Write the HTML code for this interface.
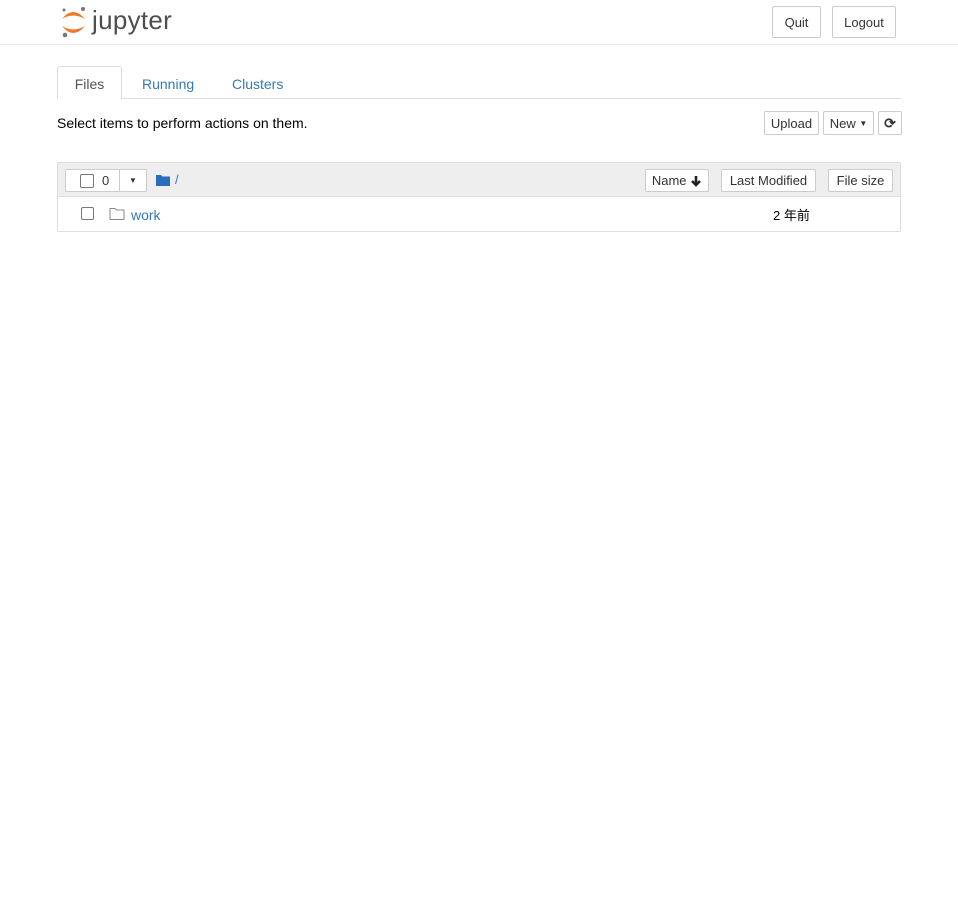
<!DOCTYPE html>
<html><head><meta charset="utf-8"><style>
*{box-sizing:border-box}
body{margin:0;background:#fff;font-family:"Liberation Sans",Arial,sans-serif;font-size:13px;color:#000;width:958px;height:911px;overflow:hidden;position:relative}
.a{position:absolute}
.btn{position:absolute;border:1px solid #ccc;background:#fff;color:#333;font-size:13px;display:flex;align-items:center;justify-content:center;border-radius:2px}
</style></head><body>
<svg class="a" style="left:58px;top:4px" width="32" height="36" viewBox="0 0 32 36">
<path d="M4 15 Q15 1 27 15 Q15 8 4 15Z" fill="#f37726"/>
<path d="M4 22 Q15 36 27 22 Q15 29 4 22Z" fill="#f37726"/>
<circle cx="6" cy="6" r="1.5" fill="#767677"/>
<circle cx="25" cy="5" r="2" fill="#767677"/>
<circle cx="7" cy="31" r="2.3" fill="#767677"/>
</svg>
<div class="a" style="left:92px;top:5px;font-size:26px;color:#4e4e4e;letter-spacing:0.3px">jupyter</div>
<div class="btn" style="left:772px;top:6px;width:49px;height:32px">Quit</div>
<div class="btn" style="left:832px;top:6px;width:64px;height:32px">Logout</div>
<div class="a" style="left:0;top:44px;width:958px;height:1px;background:#e7e7e7"></div>

<div class="a" style="left:57px;top:98px;width:844px;height:1px;background:#ddd"></div>
<div class="a" style="left:57px;top:66px;width:65px;height:33px;border:1px solid #ddd;border-bottom:none;background:#fff;border-radius:3px 3px 0 0;color:#555;font-size:14px;text-align:center;line-height:34px">Files</div>
<div class="a" style="left:142px;top:76px;color:#337ab7;font-size:14px">Running</div>
<div class="a" style="left:232px;top:76px;color:#337ab7;font-size:14px">Clusters</div>
<div class="a" style="left:57px;top:115px;font-size:14px">Select items to perform actions on them.</div>
<div class="btn" style="left:764px;top:111px;width:55px;height:24px;font-size:13px">Upload</div>
<div class="btn" style="left:823px;top:111px;width:51px;height:24px;font-size:13px">New&nbsp;<span style="font-size:8px">▼</span></div>
<div class="btn" style="left:878px;top:111px;width:24px;height:24px;font-size:14px;font-weight:bold">⟳</div>

<div class="a" style="left:57px;top:162px;width:844px;height:70px;border:1px solid #ddd;border-radius:2px"></div>
<div class="a" style="left:58px;top:163px;width:842px;height:34px;background:#eee;border-bottom:1px solid #ddd"></div>
<div class="btn" style="left:65px;top:169px;width:55px;height:23px;border-radius:2px 0 0 2px;justify-content:flex-start;padding-left:14px"><span style="display:inline-block;width:14px;height:14px;border:1px solid #777;border-radius:2px;margin-right:8px"></span>0</div>
<div class="btn" style="left:119px;top:169px;width:28px;height:23px;font-size:8px">▼</div>
<svg class="a" style="left:156px;top:174px" width="14" height="12" viewBox="0 0 14 12"><path d="M0 1h5l1.5 1.5H14V12H0Z" fill="#2a6ebb"/></svg>
<div class="a" style="left:175px;top:172px;color:#337ab7">/</div>
<div class="btn" style="left:645px;top:169px;width:64px;height:23px">Name&nbsp;<svg width="12" height="12" viewBox="0 0 12 12"><path d="M6 1v9M2 6l4 4 4-4" fill="none" stroke="#222" stroke-width="2.6"/></svg></div>
<div class="btn" style="left:721px;top:169px;width:95px;height:23px">Last Modified</div>
<div class="btn" style="left:828px;top:169px;width:65px;height:23px">File size</div>
<span class="a" style="left:81px;top:207px;width:13px;height:13px;border:1px solid #777;border-radius:2px"></span>
<svg class="a" style="left:109px;top:207px" width="16" height="14" viewBox="0 0 16 14"><path d="M1 1.5h5l1.5 1.5H15V12.5H1Z" fill="none" stroke="#888" stroke-width="1"/></svg>
<div class="a" style="left:131px;top:207px;color:#337ab7;font-size:14px">work</div>
<div class="a" style="left:773px;top:205px;font-family:'Liberation Sans','Noto Sans CJK SC',sans-serif">2 年前</div>
</body></html>
